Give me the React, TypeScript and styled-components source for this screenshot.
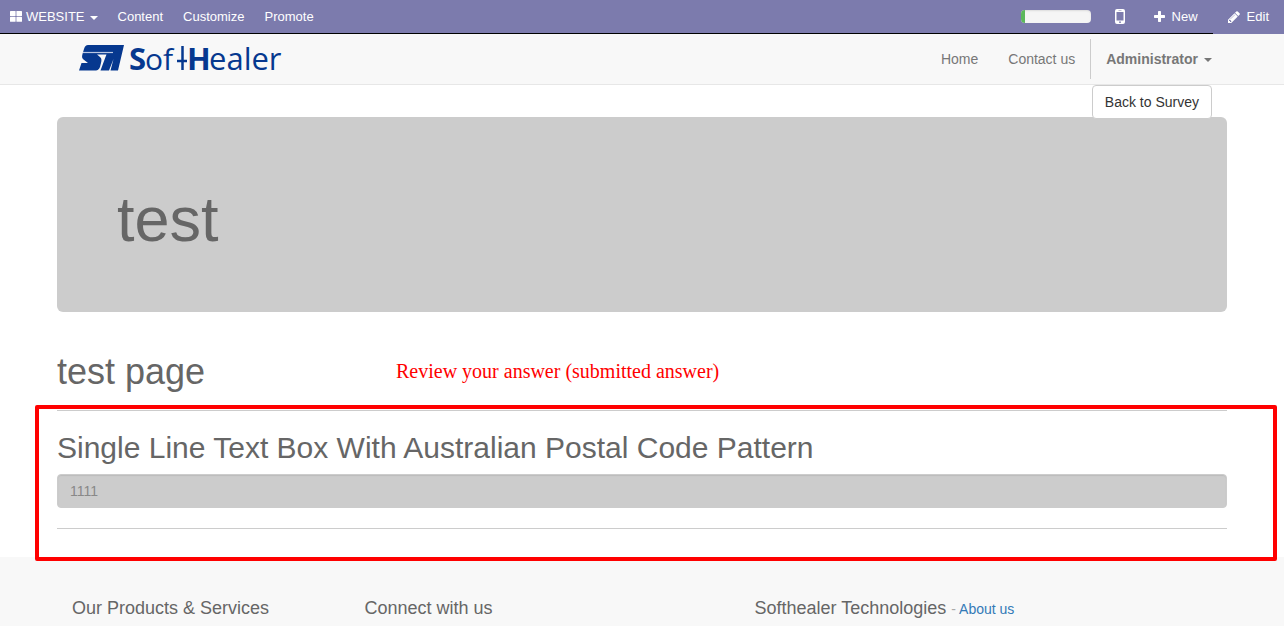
import React from "react";
import styled, { createGlobalStyle } from "styled-components";

const GlobalStyle = createGlobalStyle`
  *, *::before, *::after { box-sizing: border-box; }
  body {
    margin: 0;
    background: #fff;
    color: #666;
    font-family: "Liberation Sans", Arial, sans-serif;
    font-size: 14px;
    line-height: 20px;
  }
  h1, h2, h3, h4, p { margin: 0; font-weight: 400; }
`;

const EditorBar = styled.nav`
  display: flex;
  justify-content: space-between;
  height: 34px;
  background: #7c7bad;
  border-bottom: 1px solid #000;
  font-size: 13px;
`;

const BarGroup = styled.div`
  display: flex;
  align-items: stretch;
`;

const BarButton = styled.button<{ $pad?: number; $gap?: number; $cover?: boolean }>`
  display: flex;
  align-items: center;
  gap: ${(p) => p.$gap ?? 7}px;
  margin: ${(p) => (p.$cover ? "0 0 -1px" : "0")};
  padding: 0 ${(p) => p.$pad ?? 10}px;
  border: 0;
  background: #7c7bad;
  color: #fff;
  font: inherit;
  cursor: pointer;
`;

const MenuLabel = styled.span`
  display: flex;
  align-items: center;
  gap: 4px;
`;

const Caret = styled.span`
  margin-top: 2px;
  border-top: 4px solid currentColor;
  border-left: 4px solid transparent;
  border-right: 4px solid transparent;
`;

const Progress = styled.div`
  align-self: center;
  width: 70px;
  height: 13px;
  margin-right: 10px;
  overflow: hidden;
  border-radius: 4px;
  background: #f5f5f5;
  box-shadow: inset 0 1px 2px rgba(0, 0, 0, 0.1);
`;

const ProgressFill = styled.div`
  height: 100%;
  background: #5cb85c;
`;

const Header = styled.header`
  background: #f8f8f8;
  border-bottom: 1px solid #e7e7e7;
`;

const Container = styled.div`
  max-width: 1170px;
  margin: 0 auto;
`;

const HeaderRow = styled(Container)`
  display: flex;
  justify-content: space-between;
  align-items: center;
  height: 50px;
  padding: 0 0 0 22px;
`;

const Brand = styled.a`
  display: flex;
`;

const NavLinks = styled.div`
  display: flex;
  align-items: center;
`;

const NavLink = styled.a`
  padding: 0 15px;
  color: #777;
  text-decoration: none;
`;

const UserMenu = styled.button`
  display: flex;
  align-items: center;
  gap: 6px;
  height: 40px;
  padding: 0 15px;
  border: 0;
  border-left: 1px solid #ccc;
  background: none;
  color: #777;
  font: inherit;
  font-weight: 700;
  cursor: pointer;
`;

const Actions = styled(Container)`
  display: flex;
  justify-content: flex-end;
  height: 32px;
  padding: 0 15px;
`;

const BackLink = styled.a`
  z-index: 1;
  height: 34px;
  padding: 6px 12px;
  border: 1px solid #ccc;
  border-radius: 4px;
  background: #fff;
  color: #333;
  text-decoration: none;
`;

const Jumbotron = styled.div`
  padding: 68px 60px 58px;
  border-radius: 6px;
  background: #ccc;
`;

const SurveyTitle = styled.h1`
  font-size: 63px;
  line-height: 69px;
`;

const PageHeading = styled.div`
  display: grid;
  grid-template-columns: 339px 1fr;
  align-items: center;
  padding-top: 40px;
`;

const PageTitle = styled.h1`
  font-size: 36px;
  line-height: 40px;
`;

const Note = styled.p`
  padding-bottom: 2px;
  color: #f00;
  font-family: "Liberation Serif", "Times New Roman", serif;
  font-size: 20px;
  line-height: 24px;
`;

const Highlight = styled.section`
  position: relative;
  z-index: 1;
  margin: 13px -50px -4px -22px;
  padding: 1px 46px 28px 18px;
  border: 4px solid #f00;
  border-radius: 2px;
`;

const Rule = styled.hr`
  height: 1px;
  margin: 0;
  border: 0;
  background: #ccc;
`;

const Question = styled.label`
  display: block;
  padding: 20px 0 9px;
  font-size: 30px;
  line-height: 34px;
`;

const Answer = styled.input`
  display: block;
  width: 100%;
  height: 34px;
  margin-bottom: 20px;
  padding: 6px 12px;
  border: 1px solid #ccc;
  border-radius: 4px;
  background: #ccc;
  color: #888;
  box-shadow: inset 0 1px 1px rgba(0, 0, 0, 0.08);
  font: inherit;
`;

const Footer = styled.footer`
  padding: 41px 0 20px;
  background: #f8f8f8;
`;

const FooterColumns = styled(Container)`
  display: grid;
  grid-template-columns: 3fr 4fr 5fr;
`;

const FooterTitle = styled.h4`
  padding: 0 15px;
  font-size: 18px;
  line-height: 20px;
`;

const Small = styled.small`
  color: #aaa;
  font-size: 14px;
  line-height: 1;
`;

const AboutLink = styled.a`
  color: #337ab7;
  text-decoration: none;
`;

const Logo = () => (
  <svg width="210" height="48" viewBox="1 -6 210 48" role="img" aria-label="SoftHealer">
    <path
      fill="#06388f"
      d="M10 4H46L40 29.500H32.500L35.500 18L31 29.500H22.500L27.500 16L28.500 13.500H19L22 16C24 17.500 23.500 20 23 22L22 26C21 29 19 29.500 16 29.500H1L3.500 22H10L5.500 18.500C3.500 17 4 15 4.500 13L6 8C7 5 8 4 10 4Z"
    />
    <path d="M5 11.500H35" stroke="#b9c6e2" strokeWidth="1.200" />
    <g fill="#06388f" fontFamily="'Open Sans', sans-serif">
      <text x="51" y="29" fontSize="31" fontWeight="700">S</text>
      <text x="67" y="29" fontSize="30">of</text>
      <text x="109" y="29" fontSize="31" fontWeight="700">H</text>
      <text x="131" y="29" fontSize="31">ealer</text>
    </g>
    <path d="M104.500 5V29M99 20H109" stroke="#06388f" strokeWidth="2.500" />
  </svg>
);

const GridIcon = () => (
  <svg width="12" height="11" viewBox="0 0 12 11" fill="#fff" aria-hidden="true">
    <rect width="5.600" height="5" rx="0.600" />
    <rect x="6.400" width="5.600" height="5" rx="0.600" />
    <rect y="5.800" width="5.600" height="5" rx="0.600" />
    <rect x="6.400" y="5.800" width="5.600" height="5" rx="0.600" />
  </svg>
);

const PhoneIcon = () => (
  <svg width="10" height="15" viewBox="0 0 10 15" aria-hidden="true">
    <path
      fill="#fff"
      fillRule="evenodd"
      d="M2 0H8Q10 0 10 2V13Q10 15 8 15H2Q0 15 0 13V2Q0 0 2 0ZM1.5 3V11.5H8.5V3ZM3.5 1.2V1.8H6.5V1.2ZM5 12.3A.9 .9 0 1 0 5 14.1A.9 .9 0 1 0 5 12.3Z"
    />
  </svg>
);

const PlusIcon = () => (
  <svg width="11" height="14" viewBox="192 0 1408 1792" aria-hidden="true">
    <path
      fill="#fff"
      d="M1600 736v192q0 40-28 68t-68 28h-416v416q0 40-28 68t-68 28H800q-40 0-68-28t-28-68v-416H288q-40 0-68-28t-28-68V736q0-40 28-68t68-28h416V224q0-40 28-68t68-28h192q40 0 68 28t28 68v416h416q40 0 68 28t28 68z"
    />
  </svg>
);

const PencilIcon = () => (
  <svg width="12" height="14" viewBox="128 0 1536 1792" aria-hidden="true">
    <path
      fill="#fff"
      fillRule="evenodd"
      d="M491 1536l91-91-235-235-91 91v107h128v128h107zM1014 608q0-22-22-22-10 0-17 7l-542 542q-7 7-7 17 0 22 22 22 10 0 17-7l542-542q7-7 7-17zM960 416l416 416-832 832H128v-416zM1643 512q0 53-37 90l-166 166-416-416 166-165q36-38 90-38 53 0 91 38l235 234q37 39 37 91z"
    />
  </svg>
);

const progress = 7;

export default function App() {
  return (
    <>
      <GlobalStyle />
      <EditorBar>
        <BarGroup>
          <BarButton $gap={5}>
            <MenuLabel><GridIcon />WEBSITE</MenuLabel>
            <Caret />
          </BarButton>
          <BarButton>Content</BarButton>
          <BarButton>Customize</BarButton>
          <BarButton>Promote</BarButton>
        </BarGroup>
        <BarGroup>
          <Progress role="progressbar" aria-label="Setup progress" aria-valuenow={progress}>
            <ProgressFill style={{ width: `${progress}%` }} />
          </Progress>
          <BarButton $pad={14} aria-label="Mobile preview"><PhoneIcon /></BarButton>
          <BarButton $pad={15}><PlusIcon />New</BarButton>
          <BarButton $pad={15} $cover><PencilIcon />Edit</BarButton>
        </BarGroup>
      </EditorBar>
      <Header>
        <HeaderRow>
          <Brand href="#"><Logo /></Brand>
          <NavLinks>
            <NavLink href="#">Home</NavLink>
            <NavLink href="#">Contact us</NavLink>
            <UserMenu>Administrator<Caret /></UserMenu>
          </NavLinks>
        </HeaderRow>
      </Header>
      <main>
        <Actions>
          <BackLink href="#">Back to Survey</BackLink>
        </Actions>
        <Container>
          <Jumbotron>
            <SurveyTitle>test</SurveyTitle>
          </Jumbotron>
          <PageHeading>
            <PageTitle>test page</PageTitle>
            <Note>Review your answer (submitted answer)</Note>
          </PageHeading>
          <Highlight>
            <Rule />
            <Question htmlFor="postal-code">Single Line Text Box With Australian Postal Code Pattern</Question>
            <Answer id="postal-code" type="text" value="1111" readOnly />
            <Rule />
          </Highlight>
        </Container>
      </main>
      <Footer>
        <FooterColumns>
          <FooterTitle>Our Products &amp; Services</FooterTitle>
          <FooterTitle>Connect with us</FooterTitle>
          <FooterTitle>
            Softhealer Technologies <Small>- <AboutLink href="#">About us</AboutLink></Small>
          </FooterTitle>
        </FooterColumns>
      </Footer>
    </>
  );
}
